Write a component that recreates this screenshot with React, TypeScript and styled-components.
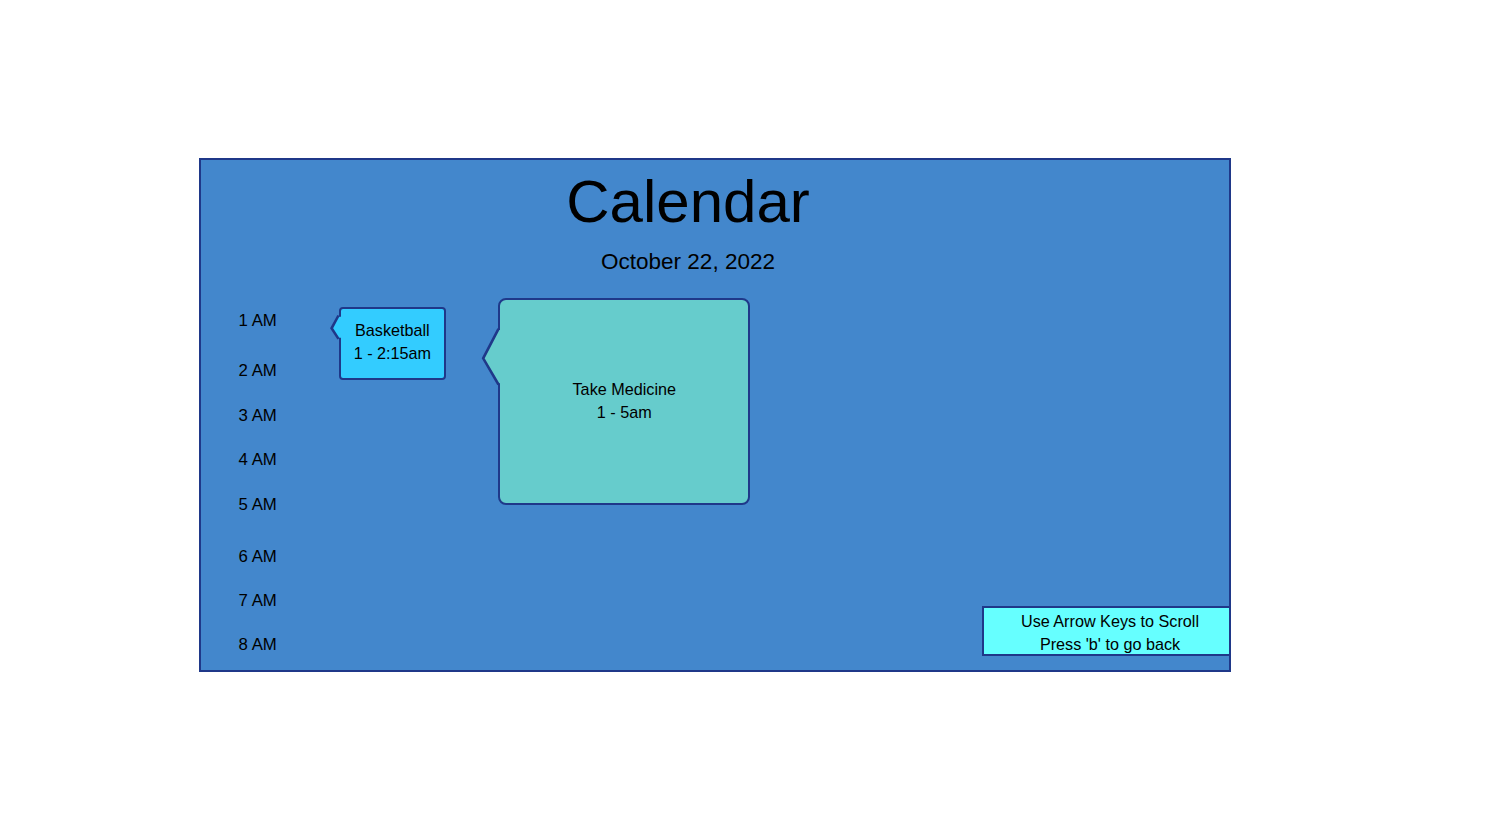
import React from "react";
import styled, { createGlobalStyle } from "styled-components";

const NAVY = "#1f3889";

const GlobalStyle = createGlobalStyle`
  html, body {
    margin: 0;
    padding: 0;
    background: #ffffff;
    font-family: "Liberation Sans", Arial, sans-serif;
    color: #000000;
  }
`;

const Frame = styled.div`
  position: relative;
  box-sizing: border-box;
  width: 1032px;
  height: 514px;
  margin: 158px 0 0 199px;
  border: 2.4px solid ${NAVY};
  background: #4387cc;
  overflow: hidden;
`;

const Header = styled.header`
  margin-right: 54px;
  text-align: center;
`;

const Title = styled.h1`
  margin: 0;
  padding-top: 12px;
  font-size: 60px;
  line-height: 60px;
  font-weight: normal;
`;

const DateLine = styled.div`
  margin-top: 18.5px;
  font-size: 22.5px;
  line-height: 22.5px;
`;

const Body = styled.div`
  display: flex;
  align-items: flex-start;
`;

const TimeColumn = styled.div`
  display: flex;
  flex-direction: column;
  width: 100px;
  padding-left: 37.6px;
`;

const HourLabel = styled.div<{ $gap: number }>`
  margin-top: ${({ $gap }) => $gap}px;
  font-size: 16.8px;
  line-height: 16px;
  height: 16px;
  white-space: nowrap;
`;

const EventCard = styled.div<{
  $bg: string;
  $radius: number;
  $width: number;
  $height: number;
  $top: number;
  $left: number;
  $lift: number;
}>`
  position: relative;
  box-sizing: border-box;
  display: flex;
  flex-direction: column;
  align-items: center;
  justify-content: center;
  flex-shrink: 0;
  width: ${({ $width }) => $width}px;
  height: ${({ $height }) => $height}px;
  margin-top: ${({ $top }) => $top}px;
  margin-left: ${({ $left }) => $left}px;
  padding-bottom: ${({ $lift }) => $lift * 2}px;
  border: 2.5px solid ${NAVY};
  border-radius: ${({ $radius }) => $radius}px;
  background: ${({ $bg }) => $bg};
  font-size: 16.2px;
  line-height: 23px;
  text-align: center;
`;

const PointerSvg = styled.svg<{ $x: number; $y: number }>`
  position: absolute;
  left: ${({ $x }) => $x}px;
  top: ${({ $y }) => $y}px;
  overflow: visible;
`;

const Hint = styled.div`
  position: absolute;
  left: 781px;
  top: 446.3px;
  box-sizing: border-box;
  width: 256px;
  height: 49.5px;
  padding-top: 1.5px;
  border: 2.5px solid ${NAVY};
  background: #66ffff;
  font-size: 16.2px;
  line-height: 22.7px;
  text-align: center;
`;

type PointerProps = {
  x: number;
  y: number;
  w: number;
  h: number;
  base: number;
  tip: [number, number];
  top: number;
  bottom: number;
  fill: string;
};

const Pointer = ({ x, y, w, h, base, tip, top, bottom, fill }: PointerProps) => (
  <PointerSvg $x={x} $y={y} width={w} height={h} viewBox={`0 0 ${w} ${h}`}>
    <polygon
      points={`${base},${top} ${tip[0]},${tip[1]} ${base},${bottom} ${w},${bottom} ${w},${top}`}
      fill={fill}
    />
    <polyline
      points={`${base},${top - 1.2} ${tip[0]},${tip[1]} ${base},${bottom + 1.2}`}
      fill="none"
      stroke={NAVY}
      strokeWidth={2.6}
      strokeLinejoin="miter"
    />
  </PointerSvg>
);

const hours = [
  { label: "1 AM", gap: 40 },
  { label: "2 AM", gap: 34 },
  { label: "3 AM", gap: 29.3 },
  { label: "4 AM", gap: 28 },
  { label: "5 AM", gap: 29 },
  { label: "6 AM", gap: 35.7 },
  { label: "7 AM", gap: 28.3 },
  { label: "8 AM", gap: 28 },
];

const App = () => (
  <>
    <GlobalStyle />
    <Frame>
      <Header>
        <Title>Calendar</Title>
        <DateLine>October 22, 2022</DateLine>
      </Header>
      <Body>
        <TimeColumn>
          {hours.map((h) => (
            <HourLabel key={h.label} $gap={h.gap}>
              {h.label}
            </HourLabel>
          ))}
        </TimeColumn>
        <EventCard
          $bg="#33ccff"
          $radius={4}
          $width={107.5}
          $height={73.5}
          $top={33.6}
          $left={0}
          $lift={1.5}
        >
          <Pointer
            x={-10.5}
            y={5}
            w={12}
            h={26}
            base={8.5}
            tip={[1.6, 14.3]}
            top={2.7}
            bottom={23.7}
            fill="#33ccff"
          />
          <div>Basketball</div>
          <div>1 - 2:15am</div>
        </EventCard>
        <EventCard
          $bg="#66cccc"
          $radius={8}
          $width={252}
          $height={206.5}
          $top={25}
          $left={52.2}
          $lift={0.5}
        >
          <Pointer
            x={-19}
            y={26.5}
            w={22}
            h={60}
            base={17.5}
            tip={[2.2, 31.3]}
            top={3}
            bottom={56.3}
            fill="#66cccc"
          />
          <div>Take Medicine</div>
          <div>1 - 5am</div>
        </EventCard>
      </Body>
      <Hint>
        <div>Use Arrow Keys to Scroll</div>
        <div>Press 'b' to go back</div>
      </Hint>
    </Frame>
  </>
);

export default App;
